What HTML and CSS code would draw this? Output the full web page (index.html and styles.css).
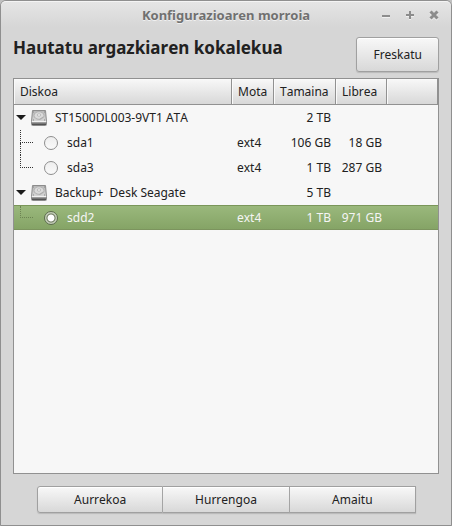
FILE: index.html
```html
<!DOCTYPE html>
<html lang="eu">
<head>
<meta charset="utf-8">
<title>Konfigurazioaren morroia</title>
<link rel="stylesheet" href="styles.css">
</head>
<body>
<svg class="defs" aria-hidden="true">
  <defs>
    <linearGradient id="metal" x1="0" y1="0" x2="0" y2="1">
      <stop offset="0" stop-color="#b8b8b8"/><stop offset="1" stop-color="#e2e2e2"/>
    </linearGradient>
    <linearGradient id="front" x1="0" y1="0" x2="0" y2="1">
      <stop offset="0" stop-color="#b0b0b0"/><stop offset="1" stop-color="#404040"/>
    </linearGradient>
    <symbol id="disk" viewBox="0 0 16 16">
      <path d="M1.500 .5h13l1 11v3q0 1-1 1h-13q-1 0-1-1v-3z" fill="url(#metal)" stroke="#8c8c8c"/>
      <path d="M1 12h14v3h-14z" fill="url(#front)"/>
      <path d="M1 11.500h14" stroke="#f2f2f2"/>
      <ellipse cx="8" cy="5.500" rx="5" ry="3.800" fill="#dadada" stroke="#b0b0b0"/>
      <ellipse cx="8" cy="5" rx="1.700" ry="1.200" fill="#f5f5f5" stroke="#a8a8a8" stroke-width=".7"/>
      <path d="M8.500 9.500l3.500-2.500" stroke="#aaa"/>
      <path d="M2 2h1M13 2h1M2 10h1M13 10h1" stroke="#888"/>
    </symbol>
  </defs>
</svg>
<main class="window">
  <header class="titlebar">
    <h1 class="title">Konfigurazioaren morroia</h1>
    <div class="controls">
      <button class="control" type="button" aria-label="Minimizatu"><svg viewBox="0 0 10 10"><path d="M1 6h8"/></svg></button>
      <button class="control" type="button" aria-label="Maximizatu"><svg viewBox="0 0 10 10"><path d="M1 5h8M5 1v8"/></svg></button>
      <button class="control" type="button" aria-label="Itxi"><svg viewBox="0 0 10 10"><path class="cross" d="M1.500 1.500l7 7M8.500 1.500l-7 7"/></svg></button>
    </div>
  </header>
  <section class="content">
    <div class="top">
      <h2 class="heading">Hautatu argazkiaren kokalekua</h2>
      <button class="button refresh" type="button">Freskatu</button>
    </div>
    <div class="list">
      <table class="disks">
        <colgroup><col><col class="col-type"><col class="col-size"><col class="col-free"><col class="col-rest"></colgroup>
        <thead>
          <tr><th>Diskoa</th><th>Mota</th><th>Tamaina</th><th>Librea</th><th></th></tr>
        </thead>
        <tbody>
          <tr>
            <td><div class="device"><button class="expander" type="button" aria-label="Tolestu"></button><svg class="disk"><use href="#disk"/></svg><span>ST1500DL003-9VT1 ATA</span></div></td>
            <td></td><td class="number">2 TB</td><td></td><td></td>
          </tr>
          <tr>
            <td><label class="partition"><span class="branch middle"></span><input class="radio" type="radio" name="location">sda1</label></td>
            <td>ext4</td><td class="number">106 GB</td><td class="number">18 GB</td><td></td>
          </tr>
          <tr>
            <td><label class="partition"><span class="branch"></span><input class="radio" type="radio" name="location">sda3</label></td>
            <td>ext4</td><td class="number">1 TB</td><td class="number">287 GB</td><td></td>
          </tr>
          <tr>
            <td><div class="device"><button class="expander" type="button" aria-label="Tolestu"></button><svg class="disk"><use href="#disk"/></svg><span>Backup+&nbsp; Desk Seagate</span></div></td>
            <td></td><td class="number">5 TB</td><td></td><td></td>
          </tr>
          <tr class="selected">
            <td><label class="partition"><span class="branch"></span><input class="radio" type="radio" name="location" checked>sdd2</label></td>
            <td>ext4</td><td class="number">1 TB</td><td class="number">971 GB</td><td></td>
          </tr>
        </tbody>
      </table>
    </div>
    <nav class="actions">
      <button class="button" type="button">Aurrekoa</button>
      <button class="button" type="button">Hurrengoa</button>
      <button class="button" type="button">Amaitu</button>
    </nav>
  </section>
</main>
</body>
</html>
```
FILE: styles.css
```css
* {
  box-sizing: border-box;
}

body {
  margin: 0;
  background: #c0c0c0;
  color: #212121;
  font: 12px/18px "Noto Sans", "Open Sans", sans-serif;
  font-kerning: none;
}

.defs {
  position: absolute;
  width: 0;
  height: 0;
}

.window {
  display: flex;
  flex-direction: column;
  min-height: 100vh;
  border: 1px solid #8f8f8f;
  border-radius: 6px 6px 0 0;
  background: #d6d6d6;
}

.titlebar {
  display: grid;
  grid-template-columns: 1fr auto 1fr;
  align-items: center;
  height: 26px;
  padding: 0 12px;
  border-top: 1px solid #f4f4f4;
  border-radius: 5px 5px 0 0;
  background: linear-gradient(#e5e5e5, #d6d6d6);
}

.title {
  grid-column: 2;
  margin: 0;
  color: #707070;
  font-size: 13px;
  line-height: 18px;
  text-shadow: 0 1px #f0f0f0;
}

.controls {
  display: flex;
  justify-content: flex-end;
  gap: 14px;
}

.control {
  display: flex;
  width: 10px;
  height: 10px;
  padding: 0;
  border: 0;
  background: none;
}

.control svg {
  width: 10px;
  height: 10px;
  fill: none;
  stroke: #8c8c8c;
  stroke-width: 2;
  filter: drop-shadow(0 1px 0 #f0f0f0);
}

.control .cross {
  stroke-width: 3;
}

.content {
  display: flex;
  flex: 1;
  flex-direction: column;
  padding: 10px 12px 12px;
}

.top {
  display: flex;
  justify-content: space-between;
  align-items: flex-start;
  margin-bottom: 6px;
}

.heading {
  margin: 0;
  font-size: 17px;
  line-height: 22px;
}

.button {
  padding: 0 16px;
  border: 1px solid #a0a0a0;
  background: linear-gradient(#f8f8f8, #d8d8d8);
  box-shadow: inset 0 1px #fff, 0 1px 1px #bababa;
  color: inherit;
  font: inherit;
  font-kerning: inherit;
}

.refresh {
  height: 35px;
  border-radius: 3px;
}

.list {
  flex: 1;
  border: 1px solid #919191;
  background: #f7f7f7;
}

.disks {
  width: 100%;
  border-collapse: separate;
  border-spacing: 0;
  table-layout: fixed;
}

.col-type {
  width: 42px;
}

.col-size {
  width: 62px;
}

.col-free,
.col-rest {
  width: 51px;
}

th {
  height: 26px;
  padding: 0 6px;
  border-right: 1px solid #919191;
  border-bottom: 1px solid #919191;
  background: linear-gradient(#f8f8f8, #d8d8d8);
  box-shadow: inset 1px 1px #fafafa;
  font-weight: 400;
  text-align: left;
}

td {
  height: 25px;
  padding: 0 5px;
  white-space: nowrap;
}

td:first-child {
  padding-left: 0;
}

.number {
  text-align: right;
}

.device,
.partition {
  display: flex;
  align-items: center;
  height: 25px;
}

.expander {
  width: 10px;
  height: 5px;
  margin: 0 5px 0 2px;
  padding: 0;
  border: 0;
  background: #1c1c1c;
  clip-path: polygon(0 0, 100% 0, 50% 100%);
}

.disk {
  width: 16px;
  height: 16px;
  margin-right: 8px;
}

.branch {
  display: grid;
  grid-template-rows: 1fr 1fr;
  width: 13px;
  height: 25px;
  margin: 0 11px 0 6px;
  color: #333;
}

.branch::before {
  content: "";
  border-bottom: 1px dotted;
  border-left: 1px dotted;
}

.middle::after {
  content: "";
  border-left: 1px dotted;
}

.radio {
  appearance: none;
  width: 14px;
  height: 14px;
  margin: 0 9px 0 0;
  border: 1px solid #8e8e8e;
  border-radius: 50%;
  background: linear-gradient(#eee, #fafafa);
}

.selected td {
  border-top: 1px solid #7a9659;
  border-bottom: 1px solid #7c945e;
  background: linear-gradient(#9ab87c, #85a466);
  color: #f5f5f5;
}

.selected .partition {
  height: 23px;
}

.selected .branch {
  height: 23px;
  color: #6c8352;
}

.selected .radio {
  border-color: #5c6c4d;
  background: radial-gradient(circle, #fff 0 3px, #687459 4px, #c3cdb8 5px);
}

.actions {
  display: grid;
  grid-template-columns: repeat(3, 1fr);
  margin: 12px 23px 0 24px;
}

.actions .button {
  height: 27px;
}

.actions .button + .button {
  border-left: 0;
}

.actions .button:first-child {
  border-radius: 3px 0 0 3px;
}
```
